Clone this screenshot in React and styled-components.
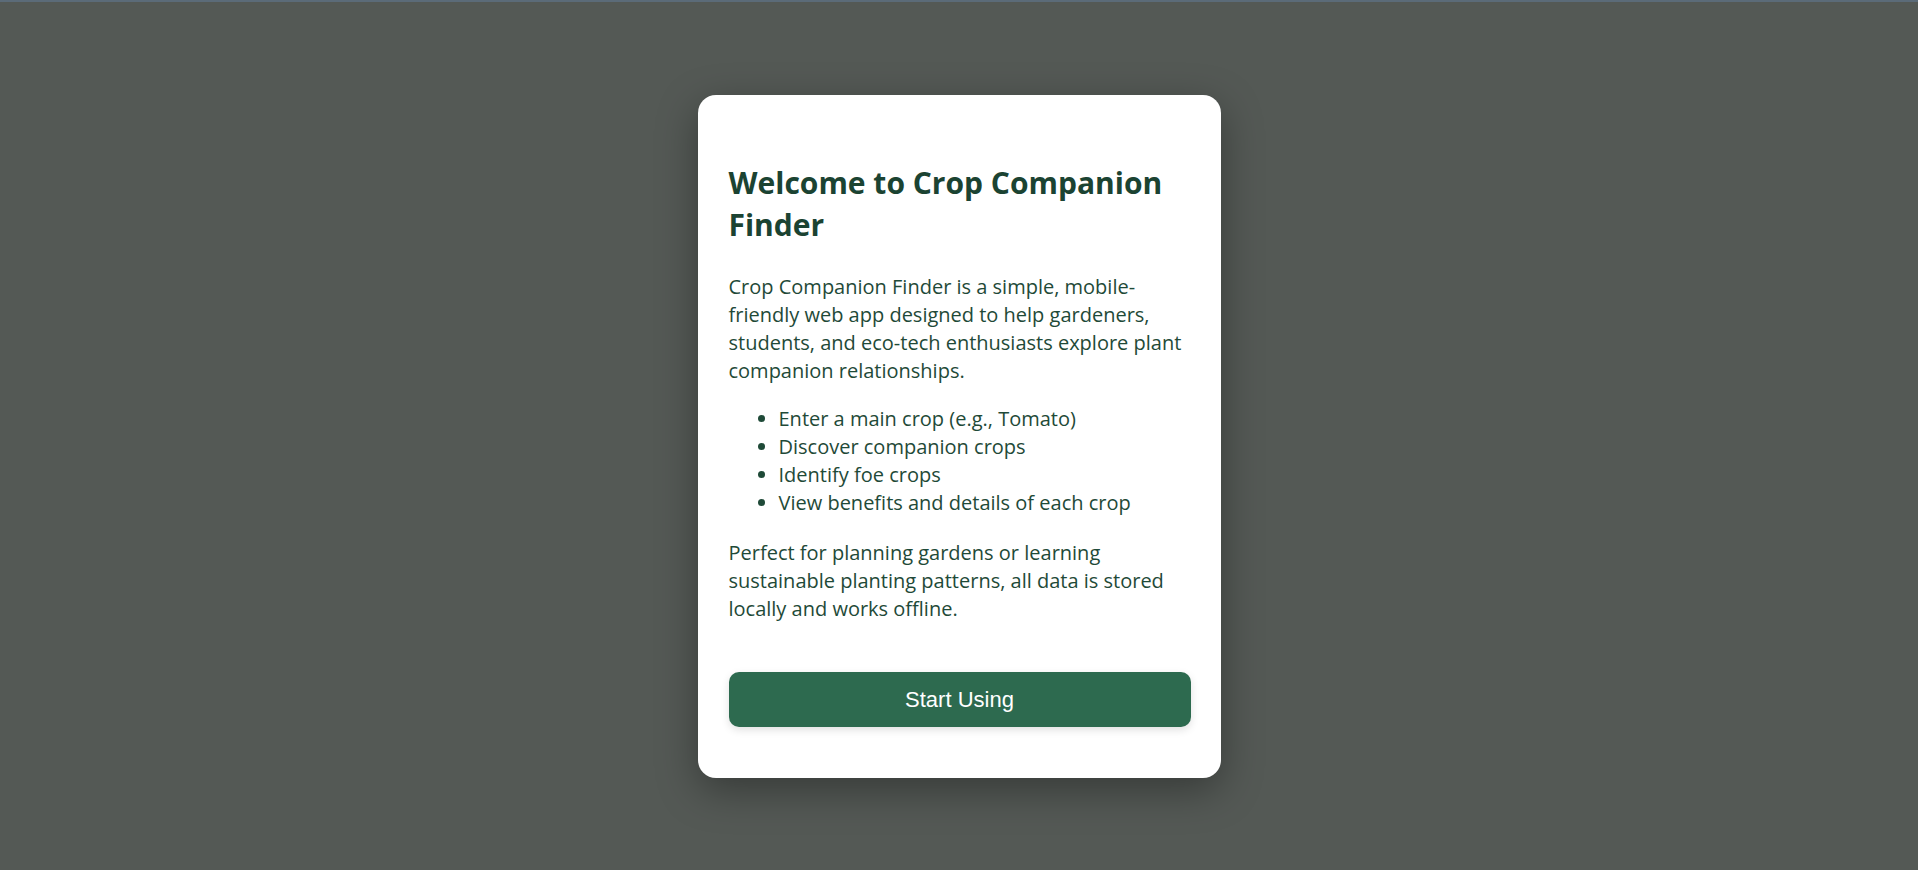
import React from "react";
import styled, { createGlobalStyle } from "styled-components";

const Global = createGlobalStyle`
  html, body { margin: 0; padding: 0; }
  body {
    background: #545955;
    font-family: "Open Sans", "Noto Sans", sans-serif;
  }
`;

const Screen = styled.div`
  min-height: 870px;
  box-sizing: border-box;
  border-top: 2px solid #5b6b78;
  display: flex;
  justify-content: center;
  align-items: flex-start;
  padding-top: 93px;
`;

const Card = styled.div`
  width: 523px;
  box-sizing: border-box;
  background: #ffffff;
  border-radius: 18px;
  padding: 67px 30px 51px 31px;
  box-shadow: 0 12px 40px rgba(0, 0, 0, 0.35);
  color: #1b4332;
`;

const Title = styled.h1`
  margin: 0 0 27px 0;
  font-size: 30px;
  line-height: 42px;
  font-weight: 700;
  color: #1b4332;
`;

const Text = styled.p`
  margin: 0 0 ${(p) => (p.$last ? 0 : 20)}px 0;
  font-size: 20px;
  line-height: 28px;
  color: #1f4a38;
`;

const List = styled.ul`
  margin: 0 0 22px 0;
  padding-left: 50px;
  font-size: 20px;
  line-height: 28px;
  color: #1f4a38;
`;

const Item = styled.li``;

const StartButton = styled.button`
  display: block;
  width: 100%;
  height: 55px;
  margin-top: 49px;
  border: none;
  border-radius: 10px;
  background: #2d6a4f;
  color: #ffffff;
  font-family: "Liberation Sans", Arial, sans-serif;
  font-size: 22px;
  cursor: pointer;
  box-shadow: 0 3px 8px rgba(0, 0, 0, 0.12);
`;

export default function App() {
  return (
    <>
      <Global />
      <Screen>
        <Card>
          <Title>Welcome to Crop Companion Finder</Title>
          <Text>
            Crop Companion Finder is a simple, mobile-friendly web app designed to help
            gardeners, students, and eco-tech enthusiasts explore plant companion
            relationships.
          </Text>
          <List>
            <Item>Enter a main crop (e.g., Tomato)</Item>
            <Item>Discover companion crops</Item>
            <Item>Identify foe crops</Item>
            <Item>View benefits and details of each crop</Item>
          </List>
          <Text $last>
            Perfect for planning gardens or learning sustainable planting patterns, all
            data is stored locally and works offline.
          </Text>
          <StartButton>Start Using</StartButton>
        </Card>
      </Screen>
    </>
  );
}
